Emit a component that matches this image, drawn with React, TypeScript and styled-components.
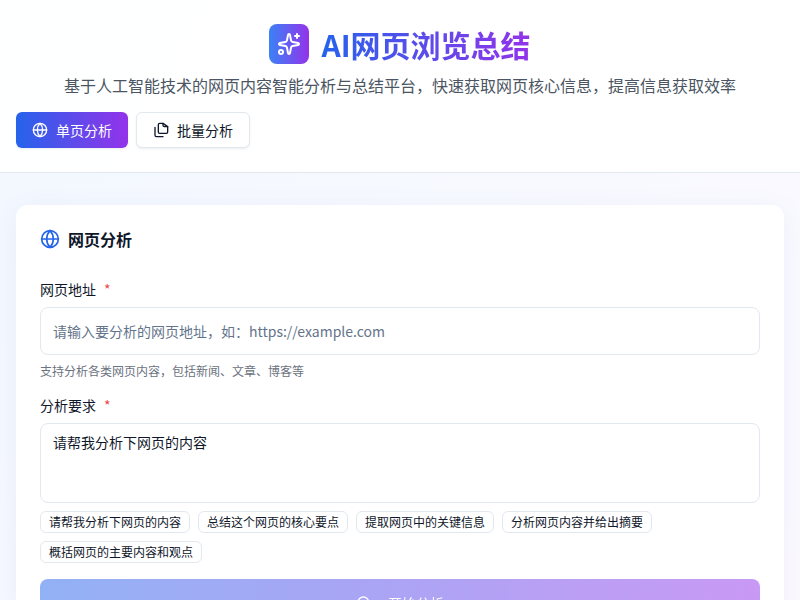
import React from "react";
import styled, { createGlobalStyle } from "styled-components";
import { Sparkles, Globe, Search } from "lucide-react";

const Global = createGlobalStyle`
  * { box-sizing: border-box; }
  html, body { margin: 0; padding: 0; overflow: hidden; height: 600px; }
  body { font-family: "Noto Sans CJK SC", "Noto Sans", sans-serif; color: #0f172a; background: #fff; }
`;

const Page = styled.div`
  min-height: 600px;
  background: linear-gradient(120deg, #f2f7ff 0%, #f7f9ff 50%, #fcf9ff 100%);
`;

const Header = styled.header`
  height: 173px;
  padding: 24px 16px 0;
  background: rgba(255, 255, 255, 0.92);
  border-bottom: 1px solid #e2e8f0;
`;

const TitleRow = styled.div`
  display: flex;
  align-items: center;
  justify-content: center;
  gap: 12px;
  height: 40px;
`;

const LogoBox = styled.div`
  width: 40px;
  height: 40px;
  border-radius: 8px;
  background: linear-gradient(90deg, #3b82f6, #9333ea);
  color: #fff;
  display: flex;
  align-items: center;
  justify-content: center;
`;

const Title = styled.h1`
  margin: 0;
  font-size: 30px;
  line-height: 40px;
  font-weight: 700;
  background: linear-gradient(90deg, #2563eb, #9333ea);
  -webkit-background-clip: text;
  background-clip: text;
  color: transparent;
`;

const Subtitle = styled.p`
  margin: 8px 0 0;
  text-align: center;
  font-size: 16px;
  line-height: 26px;
  color: #4b5563;
`;

const Tabs = styled.div`
  display: flex;
  gap: 8px;
  margin-top: 14px;
`;

const Tab = styled.button<{ $active?: boolean }>`
  height: 36px;
  padding: 0 16px;
  display: flex;
  align-items: center;
  gap: 8px;
  border-radius: 6px;
  font: inherit;
  font-size: 14px;
  border: ${(p) => (p.$active ? "none" : "1px solid #e2e8f0")};
  background: ${(p) => (p.$active ? "linear-gradient(90deg, #2563eb, #9333ea)" : "#fff")};
  color: ${(p) => (p.$active ? "#fff" : "#0f172a")};
  box-shadow: 0 1px 2px rgba(15, 23, 42, 0.08);
`;

const Main = styled.main`
  padding: 32px 16px;
`;

const Card = styled.section`
  background: #fff;
  border-radius: 12px;
  padding: 24px;
  box-shadow: 0 4px 24px rgba(100, 116, 180, 0.08);
`;

const CardTitle = styled.h2`
  margin: 0;
  display: flex;
  align-items: center;
  gap: 8px;
  height: 20px;
  font-size: 16px;
  font-weight: 600;
  color: #0f172a;
  svg { color: #2563eb; }
`;

const Field = styled.div`
  display: flex;
  flex-direction: column;
`;

const Label = styled.label`
  display: flex;
  align-items: center;
  font-size: 14px;
  line-height: 20px;
  height: 20px;
  margin-top: 30px;
  margin-bottom: 8px;
  color: #0f172a;
`;

const SecondLabel = styled(Label)`
  margin-top: 15px;
  margin-bottom: 8px;
`;

const Star = styled.span`
  color: #ef4444;
  margin-left: 8px;
  font-size: 14px;
`;

const Input = styled.input`
  height: 48px;
  padding: 0 12px;
  border: 1px solid #e2e8f0;
  border-radius: 8px;
  font: inherit;
  font-size: 14px;
  color: #0f172a;
  outline: none;
  background: #fff;
  &::placeholder { color: #64748b; opacity: 1; }
`;

const Hint = styled.p`
  margin: 7px 0 0;
  font-size: 12px;
  line-height: 18px;
  color: #6b7280;
`;

const TextArea = styled.textarea`
  height: 80px;
  padding: 8px 12px;
  border: 1px solid #e2e8f0;
  border-radius: 8px;
  font: inherit;
  font-size: 14px;
  line-height: 20px;
  color: #0f172a;
  outline: none;
  resize: none;
  display: block;
`;

const Chips = styled.div`
  display: flex;
  flex-wrap: wrap;
  gap: 8px;
  margin-top: 8px;
`;

const Chip = styled.button`
  height: 22px;
  padding: 0 8px;
  border: 1px solid #e2e8f0;
  border-radius: 6px;
  background: #fff;
  font: inherit;
  font-size: 12px;
  line-height: 20px;
  color: #0f172a;
`;

const Submit = styled.button`
  width: 100%;
  height: 48px;
  margin-top: 16px;
  border: none;
  border-radius: 8px;
  background: linear-gradient(100deg, #2563eb, #9333ea);
  opacity: 0.5;
  color: #fff;
  font: inherit;
  font-size: 14px;
  display: flex;
  align-items: center;
  justify-content: center;
  gap: 16px;
`;

const FilesIcon = () => (
  <svg width="16" height="16" viewBox="0 0 24 24" fill="none" stroke="currentColor" strokeWidth="2" strokeLinecap="round" strokeLinejoin="round">
    <path d="M15 2v3a2 2 0 0 0 2 2h5" />
    <path d="M10 17a2 2 0 0 1-2-2V4a2 2 0 0 1 2-2h5l7 5v8a2 2 0 0 1-2 2Z" />
    <path d="M3 8v12a2 2 0 0 0 2 2h10" />
  </svg>
);

const chips = [
  "请帮我分析下网页的内容",
  "总结这个网页的核心要点",
  "提取网页中的关键信息",
  "分析网页内容并给出摘要",
  "概括网页的主要内容和观点",
];

export default function App() {
  return (
    <Page>
      <Global />
      <Header>
        <TitleRow>
          <LogoBox><Sparkles size={24} strokeWidth={2} /></LogoBox>
          <Title>AI网页浏览总结</Title>
        </TitleRow>
        <Subtitle>基于人工智能技术的网页内容智能分析与总结平台，快速获取网页核心信息，提高信息获取效率</Subtitle>
        <Tabs>
          <Tab $active><Globe size={16} />单页分析</Tab>
          <Tab><FilesIcon />批量分析</Tab>
        </Tabs>
      </Header>
      <Main>
        <Card>
          <CardTitle><Globe size={20} />网页分析</CardTitle>
          <Field>
            <Label>网页地址<Star>*</Star></Label>
            <Input placeholder="请输入要分析的网页地址，如：https://example.com" />
            <Hint>支持分析各类网页内容，包括新闻、文章、博客等</Hint>
          </Field>
          <Field>
            <SecondLabel>分析要求<Star>*</Star></SecondLabel>
            <TextArea defaultValue="请帮我分析下网页的内容" />
          </Field>
          <Chips>
            {chips.map((c) => <Chip key={c}>{c}</Chip>)}
          </Chips>
          <Submit><Search size={16} />开始分析</Submit>
        </Card>
      </Main>
    </Page>
  );
}
